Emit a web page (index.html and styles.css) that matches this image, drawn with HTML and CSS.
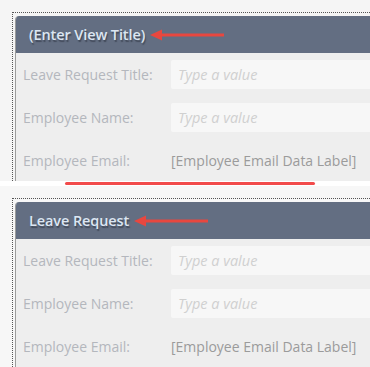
FILE: index.html
```html
<!DOCTYPE html>
<html lang="en">
<head>
    <meta charset="UTF-8">
    <meta name="viewport" content="width=device-width, initial-scale=1.0">
    <title>View Title Comparison</title>
    <link rel="stylesheet" href="styles.css">
</head>
<body>
    <!-- Before: default title -->
    <section class="panel panel-before">
        <div class="frame">
            <div class="view">
                <div class="view-head">
                    <span class="view-title">(Enter View Title)</span>
                    <svg class="arrow" width="74" height="12" viewBox="0 0 74 12">
                        <polygon points="0,6 12,0.5 12,11.5" fill="#e8473f"/>
                        <rect x="10" y="4.5" width="64" height="3" fill="#e8473f"/>
                    </svg>
                </div>
                <div class="view-body">
                    <div class="row">
                        <span class="label">Leave Request Title:</span>
                        <div class="input">Type a value</div>
                    </div>
                    <div class="row">
                        <span class="label">Employee Name:</span>
                        <div class="input">Type a value</div>
                    </div>
                    <div class="row">
                        <span class="label">Employee Email:</span>
                        <span class="data-label">[Employee Email Data Label]</span>
                    </div>
                </div>
            </div>
        </div>
    </section>

    <!-- Separator -->
    <div class="divider">
        <span class="divider-line"></span>
    </div>

    <!-- After: title set -->
    <section class="panel panel-after">
        <div class="frame">
            <div class="view">
                <div class="view-head">
                    <span class="view-title">Leave Request</span>
                    <svg class="arrow" width="74" height="12" viewBox="0 0 74 12">
                        <polygon points="0,6 12,0.5 12,11.5" fill="#e8473f"/>
                        <rect x="10" y="4.5" width="64" height="3" fill="#e8473f"/>
                    </svg>
                </div>
                <div class="view-body">
                    <div class="row">
                        <span class="label">Leave Request Title:</span>
                        <div class="input">Type a value</div>
                    </div>
                    <div class="row">
                        <span class="label">Employee Name:</span>
                        <div class="input">Type a value</div>
                    </div>
                    <div class="row">
                        <span class="label">Employee Email:</span>
                        <span class="data-label">[Employee Email Data Label]</span>
                    </div>
                </div>
            </div>
        </div>
    </section>
</body>
</html>
```
FILE: styles.css
```css
body, html {
    margin: 0;
    padding: 0;
    overflow: hidden;
    background-color: #ffffff;
    font-family: "Open Sans", "Noto Sans", sans-serif;
}

/* Panels */
.panel {
    height: 181px;
    overflow: hidden;
    padding: 12px 0 0 12px;
    box-sizing: border-box;
}

.panel-before {
    background-color: #f5f5f5;
}

.panel-after {
    height: 181px;
    background-color: #f7f7f7;
}

.frame {
    width: 420px;
    height: 100%;
    border-top: 1px dotted #555;
    border-left: 1px dotted #555;
    padding: 3px 0 0 2px;
    box-sizing: border-box;
}

/* View card */
.view {
    height: 100%;
    background-color: #eeeeee;
    border-left: 1px solid #9c9c9c;
    border-top-left-radius: 4px;
    overflow: hidden;
}

.view-head {
    height: 37px;
    background-color: #636e82;
    display: flex;
    align-items: center;
    padding-left: 13px;
}

.view-title {
    color: #dce6f2;
    font-size: 14.5px;
    font-weight: 600;
    letter-spacing: -0.1px;
    text-shadow: 1px 2px 1px rgba(40, 46, 58, 0.55);
}

.arrow {
    margin-left: 5px;
    margin-top: 1px;
}

.view-body {
    padding: 7px 0 0 7px;
    display: flex;
    flex-direction: column;
    gap: 14px;
}

.row {
    display: flex;
    align-items: center;
    height: 29px;
}

.label {
    width: 148px;
    color: #b4b7bd;
    font-size: 14px;
}

.input {
    width: 240px;
    height: 29px;
    box-sizing: border-box;
    background-color: #f7f7f7;
    border-radius: 2px;
    padding-left: 7px;
    display: flex;
    align-items: center;
    color: #d0d0d0;
    font-size: 14.5px;
    font-style: italic;
}

.data-label {
    color: #9b9b9b;
    font-size: 14px;
}

/* Separator */
.divider {
    height: 5px;
    display: flex;
    align-items: center;
    padding-left: 65px;
}

.divider-line {
    width: 250px;
    height: 3px;
    border-radius: 2px;
    background-color: #f24b4b;
}
```
